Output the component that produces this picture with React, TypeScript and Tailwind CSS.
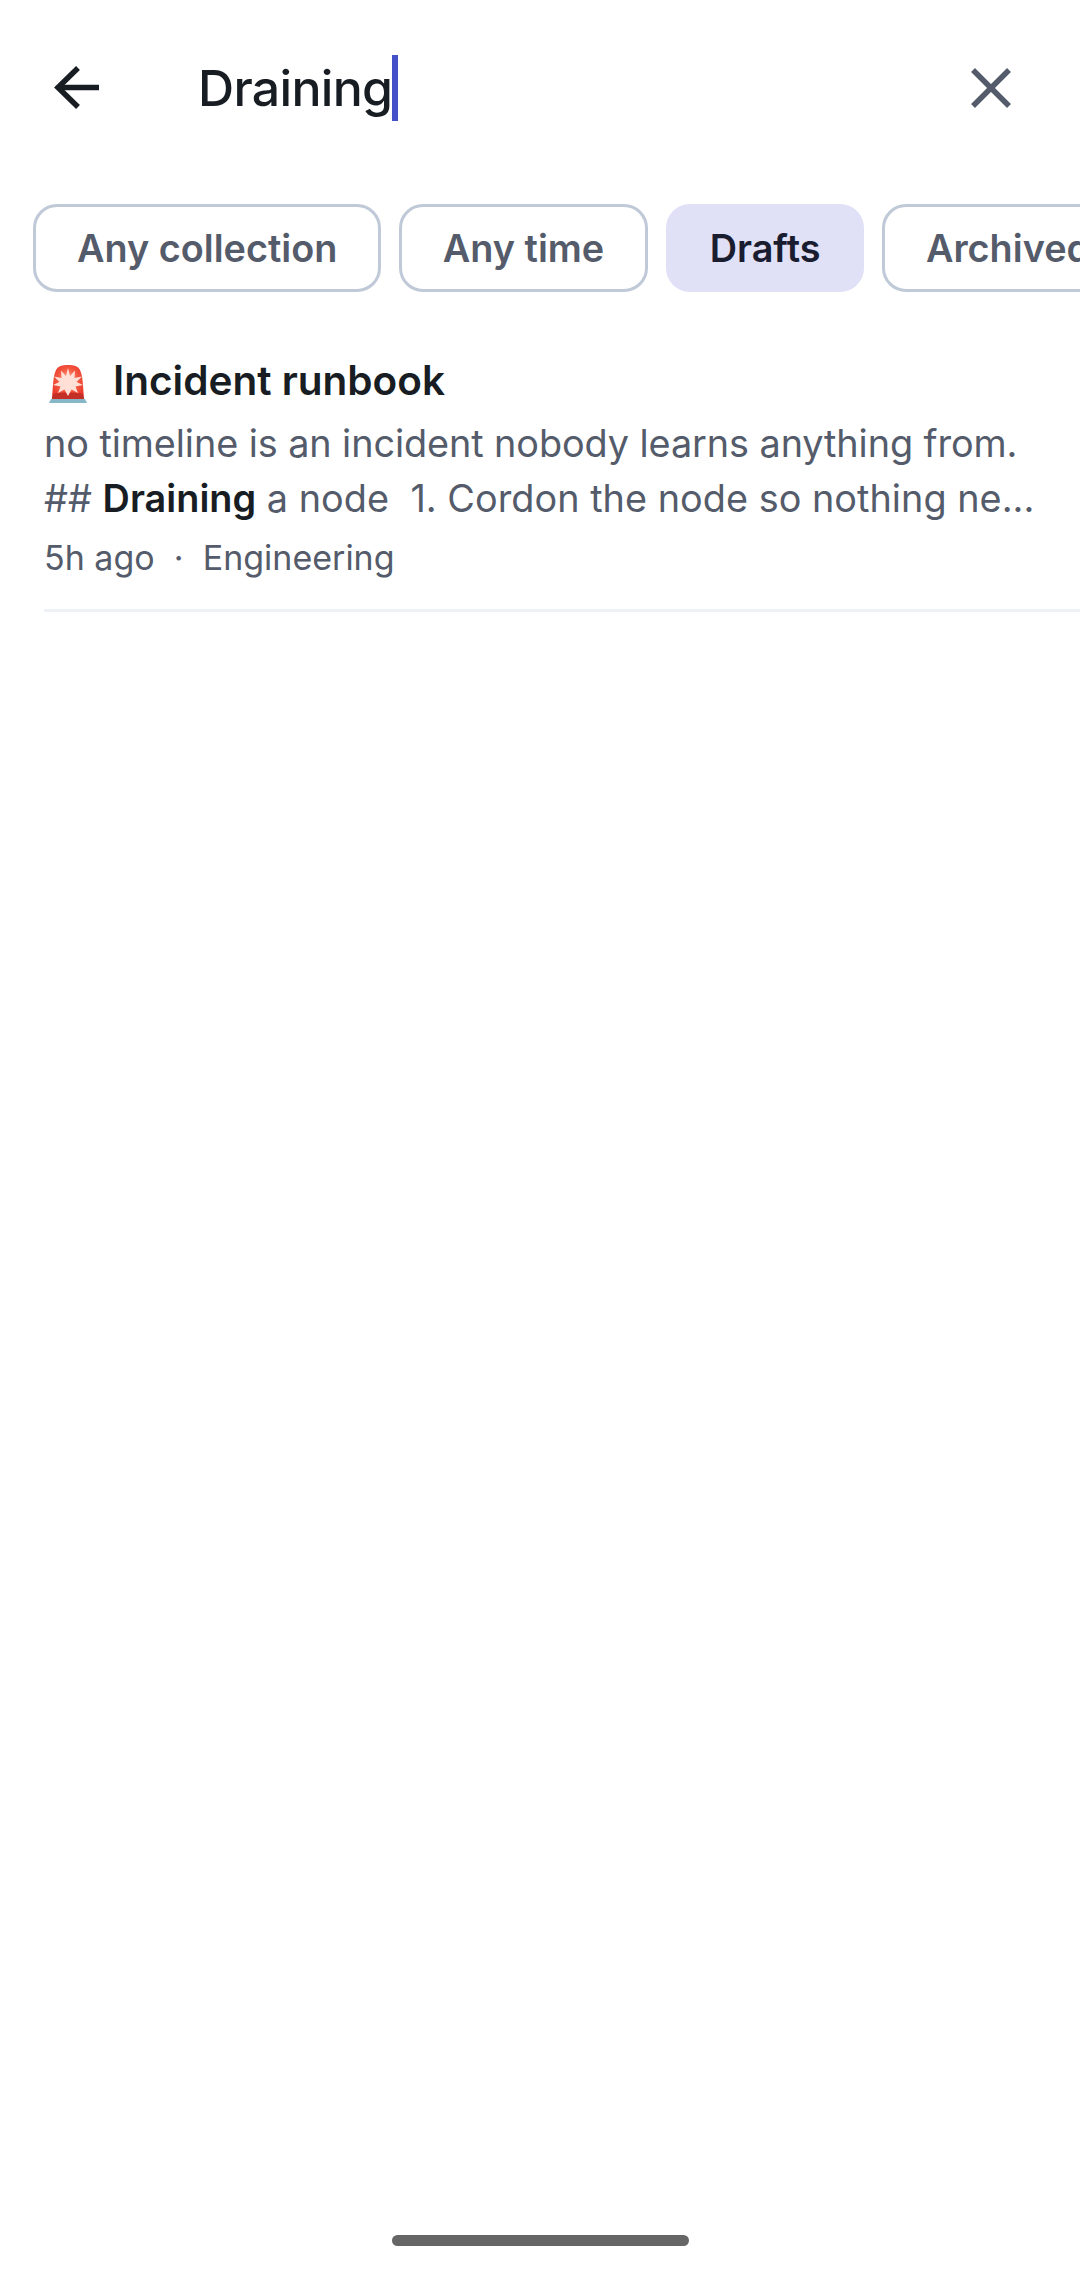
const FILTERS = [
  { label: 'Any collection', active: false },
  { label: 'Any time', active: false },
  { label: 'Drafts', active: true },
  { label: 'Archived', active: false },
]

function SirenIcon() {
  return (
    <svg width="40" height="40" viewBox="0 0 40 40" className="shrink-0">
      <defs>
        <radialGradient id="glow" cx="50%" cy="45%" r="60%">
          <stop offset="0%" stopColor="#ffb199" />
          <stop offset="55%" stopColor="#f4573f" />
          <stop offset="100%" stopColor="#e8352c" />
        </radialGradient>
      </defs>
      <path d="M1 39 L3 35 H37 L39 39 Z" fill="#86b6c8" />
      <path d="M4 35 C5 22 5 12 8 6 C10 2 14 1 20 1 C26 1 30 2 32 6 C35 12 35 22 36 35 Z" fill="url(#glow)" />
      <path d="M4 35 L5 30 C12 28 28 28 35 30 L36 35 Z" fill="#c32f27" />
      <path d="M20 4 L22 12 L27 6.5 L26.5 14 L34 12.5 L28.5 18 L35 21 L27.5 22.5 L30 29 L23.5 25.5 L20 32 L16.5 25.5 L10 29 L12.5 22.5 L5 21 L11.5 18 L6 12.5 L13.5 14 L13 6.5 L18 12 Z" fill="#ffdfd6" />
    </svg>
  )
}

export default function App() {
  return (
    <div className="flex flex-col h-[2274px] bg-white overflow-hidden font-['Inter',sans-serif]">
      {/* Search bar */}
      <header className="flex items-center h-[176px] shrink-0">
        <button className="w-[198px] h-full flex items-center pl-[51px] shrink-0">
          <svg width="50" height="50" viewBox="0 0 50 50" fill="none" stroke="#181d23" strokeWidth="5.5">
            <path d="M48 24.5 H8" />
            <path d="M27 5 L7 24.5 L27 44" />
          </svg>
        </button>
        <div className="flex-1 flex items-center">
          <span className="text-[50px] leading-[66px] font-medium text-[#181d23] tracking-[-0.7px]">Draining</span>
          <span className="w-[6px] h-[66px] bg-[#4350c8]" />
        </div>
        <button className="shrink-0 mr-[69px]">
          <svg width="40" height="40" viewBox="0 0 40 40" fill="none" stroke="#545b6a" strokeWidth="5.5" className="block">
            <path d="M2 2 L38 38" />
            <path d="M38 2 L2 38" />
          </svg>
        </button>
      </header>

      {/* Filter chips */}
      <div className="flex gap-[17.5px] pl-[33px] mt-[28px] shrink-0 overflow-hidden">
        {FILTERS.map(f => (
          <div
            key={f.label}
            className={`h-[88px] flex items-center rounded-[24px] shrink-0 text-[37.8px] font-semibold whitespace-nowrap
              ${f.active ? 'px-[44px] bg-[#e0e0f7] text-[#1a1c30]' : 'px-[41px] border-[3px] border-[#bfc9d7] text-[#545b6a]'}`}
          >
            {f.label}
          </div>
        ))}
      </div>

      {/* Result */}
      <div className="ml-[44px] mt-[58px] pb-[26px] border-b-[3px] border-[#eef2f6] shrink-0">
        <div className="flex items-center h-[62px]">
          <div className="ml-[4px] mt-[6px]"><SirenIcon /></div>
          <span className="ml-[25px] text-[40.5px] font-semibold text-[#181d23]">Incident runbook</span>
        </div>
        <p className="text-[37.8px] leading-[55px] mt-[4px] tracking-[-0.08px] text-[#545b6a] whitespace-nowrap">no timeline is an incident nobody learns anything from.</p>
        <p className="text-[37.8px] leading-[55px] tracking-[0.03px] text-[#545b6a] whitespace-pre">## <span className="font-semibold text-[#181d23]">Draining</span> a node  1. Cordon the node so nothing ne...</p>
        <p className="text-[34px] leading-[50px] mt-[7px] text-[#545b6a] whitespace-pre">5h ago  ·  Engineering</p>
      </div>

      {/* Home indicator */}
      <div className="mt-auto pb-[28px] flex justify-center shrink-0">
        <div className="w-[297px] h-[11px] rounded-full bg-[#666666]" />
      </div>
    </div>
  )
}
